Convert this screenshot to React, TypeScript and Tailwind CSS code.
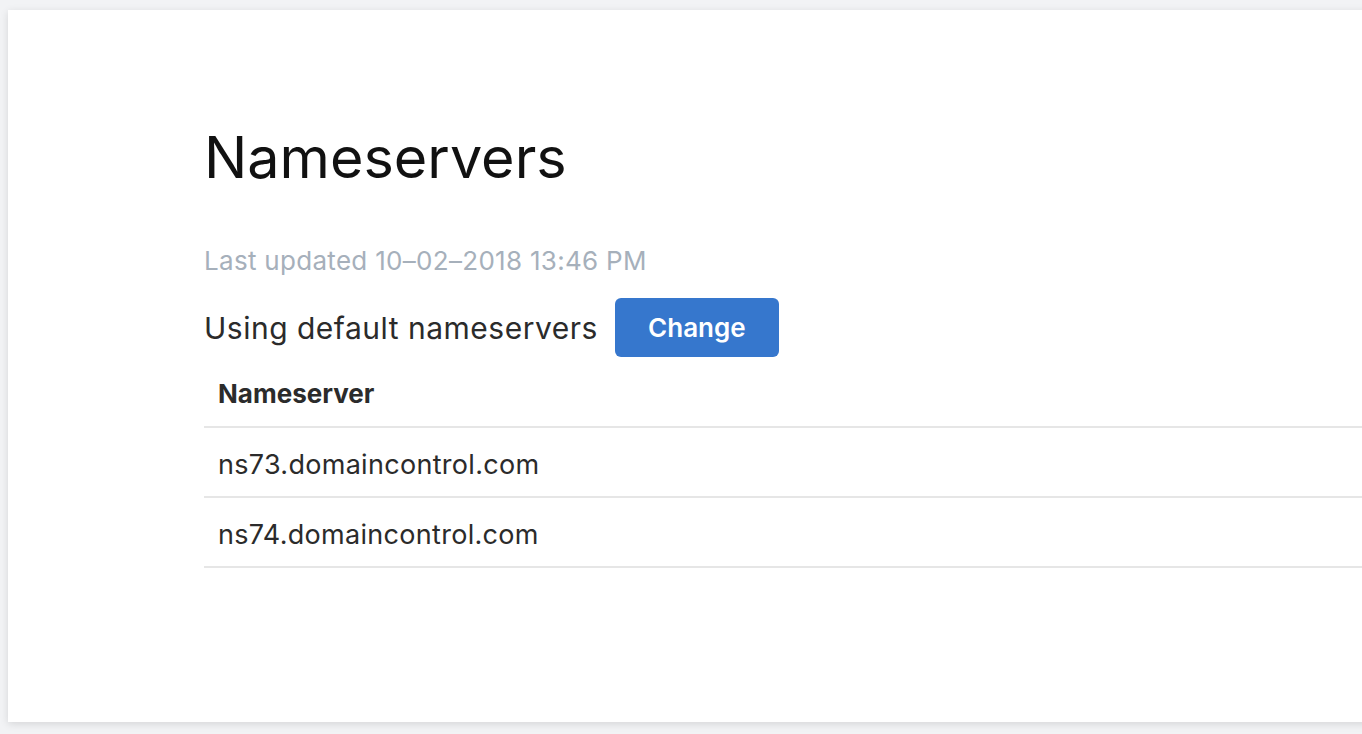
import React from 'react';

const servers = ['ns73.domaincontrol.com', 'ns74.domaincontrol.com'];

export default function App() {
  return (
    <div className="h-[734px] w-[1362px] overflow-hidden bg-[#f2f3f5] pl-2 pt-[10px]" style={{ fontFamily: 'Inter, "Open Sans", sans-serif' }}>
      <div className="h-[712px] w-[1400px] bg-white pl-[196px] pt-[112px] shadow-[0_2px_8px_rgba(0,0,0,0.12)]">
        <h1 className="text-[57.5px] font-normal leading-[70px] text-[#111]">Nameservers</h1>

        <p className="mt-[53px] text-[26px] leading-[32px] tracking-[0.3px] text-[#a6b0bb]">Last updated 10–02–2018 13:46 PM</p>

        <div className="mt-[21px] flex items-center gap-[17px]">
          <span className="text-[30px] leading-[36px] tracking-[0.5px] text-[#2b2b2b]">Using default nameservers</span>
          <button className="h-[59px] w-[164px] rounded-[6px] bg-[#3677cd] text-[26px] font-semibold text-white">Change</button>
        </div>

        <div className="w-[1158px]">
          <div className="flex h-[71px] items-center border-b-2 border-[#e6e6e6] px-[14px] pt-1 text-[26px] font-bold text-[#2b2b2b]">Nameserver</div>
          {servers.map((s) => (
            <div key={s} className="flex h-[70px] items-center border-b-2 border-[#e6e6e6] px-[14px] pt-[6px] text-[27px] tracking-[0.3px] text-[#2b2b2b]">
              {s}
            </div>
          ))}
        </div>
      </div>
    </div>
  );
}
